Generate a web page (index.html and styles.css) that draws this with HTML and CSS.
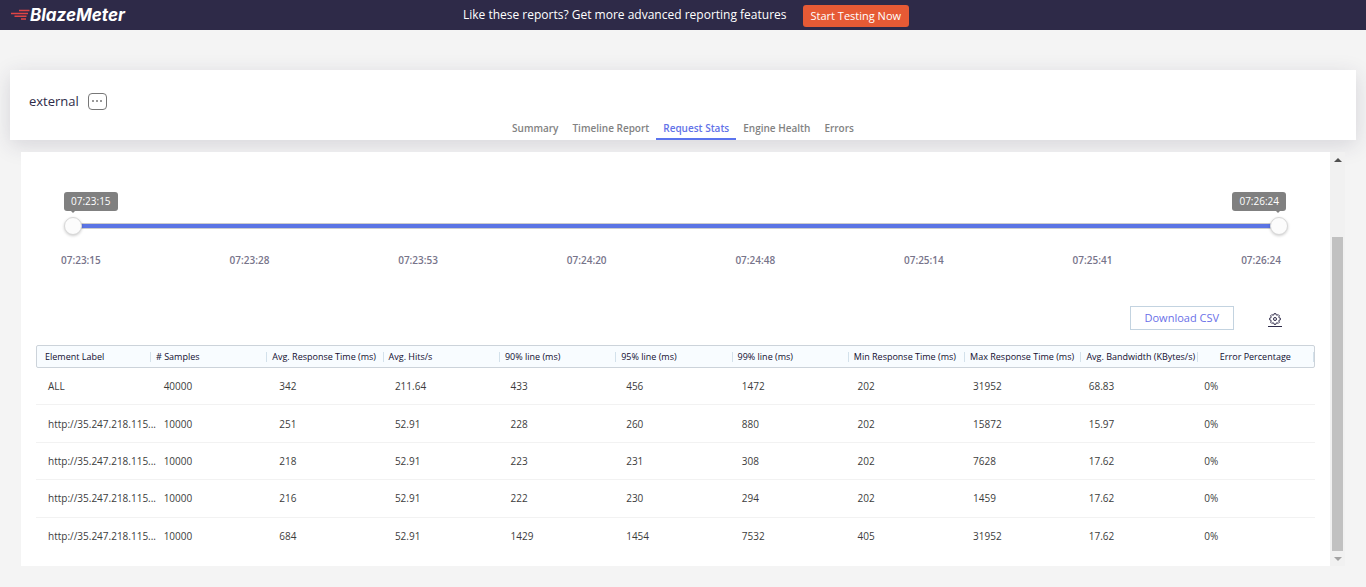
FILE: index.html
```
<!DOCTYPE html>
<html lang="en">
<head>
<meta charset="utf-8">
<meta name="viewport" content="width=device-width, initial-scale=1">
<title>BlazeMeter - Request Stats</title>
<link rel="stylesheet" href="styles.css">
</head>
<body>
<header class="topbar">
  <a class="logo" href="#">
    <svg class="logo-mark" viewBox="0 0 20 12" aria-hidden="true">
      <path d="M9 1.500H19.500M1 4.500H18M4.500 7.200H16.500M11 10H16" />
    </svg>
    <span>BlazeMeter</span>
  </a>
  <p class="promo">Like these reports? Get more advanced reporting features</p>
  <button class="cta" type="button">Start Testing Now</button>
</header>

<section class="report-head">
  <div class="report-title">
    <h1>external</h1>
    <button class="more" type="button" aria-label="More actions"><i></i><i></i><i></i></button>
  </div>
  <nav class="tabs">
    <a href="#">Summary</a>
    <a href="#">Timeline Report</a>
    <a class="active" href="#" aria-current="page">Request Stats</a>
    <a href="#">Engine Health</a>
    <a href="#">Errors</a>
  </nav>
</section>

<div class="viewport">
  <main class="panel">
    <div class="timeline">
      <div class="tips">
        <output class="tip tip-start" for="from">07:23:15</output>
        <output class="tip tip-end" for="to">07:26:24</output>
      </div>
      <div class="slider">
        <input id="from" type="range" min="0" max="189" value="0" aria-label="Start time">
        <input id="to" type="range" min="0" max="189" value="189" aria-label="End time">
      </div>
      <div class="scale">
        <span>07:23:15</span><span>07:23:28</span><span>07:23:53</span><span>07:24:20</span><span>07:24:48</span><span>07:25:14</span><span>07:25:41</span><span>07:26:24</span>
      </div>
    </div>

    <div class="actions">
      <button class="download" type="button">Download CSV</button>
      <button class="settings" type="button" aria-label="Table settings">
        <svg viewBox="0 0 12 12" aria-hidden="true">
          <path d="M4.900 1.800 5.200.6h1.600l.3 1.200 1 .4 1.100-.6 1.200 1.200-.6 1.100.4 1 1.200.3v1.600l-1.200.3-.4 1 .6 1.100-1.200 1.200-1.100-.6-1 .4-.3 1.200H5.200l-.3-1.200-1-.4-1.100.6-1.200-1.200.6-1.100-.4-1L.6 6.800V5.200l1.200-.3.4-1-.6-1.100 1.200-1.200 1.100.6z"/>
          <circle cx="6" cy="6" r="1.500"/>
        </svg>
      </button>
    </div>

    <table class="stats">
      <thead>
        <tr><th>Element Label</th><th># Samples</th><th>Avg. Response Time (ms)</th><th>Avg. Hits/s</th><th>90% line (ms)</th><th>95% line (ms)</th><th>99% line (ms)</th><th>Min Response Time (ms)</th><th>Max Response Time (ms)</th><th>Avg. Bandwidth (KBytes/s)</th><th>Error Percentage</th></tr>
      </thead>
      <tbody>
        <tr><td>ALL</td><td>40000</td><td>342</td><td>211.64</td><td>433</td><td>456</td><td>1472</td><td>202</td><td>31952</td><td>68.83</td><td>0%</td></tr>
        <tr><td>http://35.247.218.115...</td><td>10000</td><td>251</td><td>52.91</td><td>228</td><td>260</td><td>880</td><td>202</td><td>15872</td><td>15.97</td><td>0%</td></tr>
        <tr><td>http://35.247.218.115...</td><td>10000</td><td>218</td><td>52.91</td><td>223</td><td>231</td><td>308</td><td>202</td><td>7628</td><td>17.62</td><td>0%</td></tr>
        <tr><td>http://35.247.218.115...</td><td>10000</td><td>216</td><td>52.91</td><td>222</td><td>230</td><td>294</td><td>202</td><td>1459</td><td>17.62</td><td>0%</td></tr>
        <tr><td>http://35.247.218.115...</td><td>10000</td><td>684</td><td>52.91</td><td>1429</td><td>1454</td><td>7532</td><td>405</td><td>31952</td><td>17.62</td><td>0%</td></tr>
      </tbody>
    </table>
  </main>
  <div class="scrollbar" aria-hidden="true">
    <span class="arrow up"></span>
    <span class="thumb"></span>
    <span class="arrow down"></span>
  </div>
</div>
</body>
</html>
```
FILE: styles.css
```
* { box-sizing: border-box; }
body {
  margin: 0;
  background: #f4f4f4;
  color: #2e2a48;
  font-family: "Open Sans", sans-serif;
  font-size: 10px;
}
button { font-family: inherit; cursor: pointer; }
a { text-decoration: none; }

.topbar {
  display: grid;
  grid-template-columns: 1fr auto auto 1fr;
  align-items: center;
  height: 30px;
  padding: 0 4px 0 10px;
  background: #2e2a48;
  color: #fff;
}
.logo {
  display: flex;
  align-items: center;
  color: #fff;
  font: italic 700 17px/28px Inter, sans-serif;
}
.logo-mark {
  width: 20px;
  height: 12px;
  fill: none;
  stroke: #e04545;
  stroke-width: 1.4;
}
.promo { margin: 0; font-size: 12px; line-height: 28px; }
.cta {
  height: 22px;
  margin: 2px 0 0 16px;
  padding: 0 8px;
  border: 0;
  border-radius: 3px;
  background: #e65a35;
  color: #fff;
  font-size: 11px;
  line-height: 20px;
}

.report-head {
  display: flex;
  flex-direction: column;
  height: 70px;
  margin: 40px 10px 0;
  background: #fff;
  box-shadow: 0 5px 20px rgba(46, 42, 72, .15);
}
.report-title {
  display: flex;
  align-items: center;
  gap: 9px;
  padding: 22px 19px 0;
}
.report-title h1 { margin: 0; font-size: 13px; font-weight: 400; line-height: 18px; }
.more {
  display: flex;
  align-items: center;
  justify-content: center;
  gap: 2px;
  width: 19px;
  height: 17px;
  padding: 0;
  border: 1px solid #777;
  border-radius: 4px;
  background: #fff;
}
.more i { width: 2px; height: 2px; background: #999; }
.tabs { display: flex; justify-content: center; margin-top: auto; }
.tabs a {
  padding: 0 7px;
  border-bottom: 2px solid transparent;
  color: #828282;
  font-weight: 600;
  line-height: 20px;
}
.tabs .active { border-color: #5b74ee; color: #6272e8; }

.viewport { display: flex; margin: 12px 21px 0; position: relative; }
.panel { flex: 1; min-width: 0; padding: 40px 15px 11px; background: #fff; }

.timeline { padding: 0 27px 0 28px; }
.tips { display: flex; justify-content: space-between; padding-right: 2px; }
.tip {
  position: relative;
  padding: 0 7px;
  border-radius: 3px;
  background: #808080;
  color: #fff;
  line-height: 19px;
}
.tip::after {
  content: "";
  position: absolute;
  top: 19px;
  left: 7px;
  border: 2px solid transparent;
  border-top-color: #808080;
}
.tip-end::after { left: auto; right: 6px; }
.slider {
  position: relative;
  height: 18px;
  margin-top: 6px;
  background: linear-gradient(#ccc 0 1px, #5b74e4 1px 5px, #ccc 5px 6px) center / calc(100% - 18px) 6px no-repeat;
}
.slider input {
  position: absolute;
  inset: 0;
  width: 100%;
  height: 18px;
  margin: 0;
  appearance: none;
  background: transparent;
  pointer-events: none;
}
.slider input::-webkit-slider-thumb {
  appearance: none;
  width: 18px;
  height: 18px;
  border: 1px solid #d8d8d8;
  border-radius: 50%;
  background: #fcfcfc;
  box-shadow: 0 1px 3px rgba(0, 0, 0, .2);
  pointer-events: auto;
}
.scale {
  display: flex;
  justify-content: space-between;
  margin: 18px 7px 0 -3px;
  color: #77748a;
  font-weight: 600;
  line-height: 14px;
}

.actions {
  display: flex;
  align-items: center;
  justify-content: flex-end;
  gap: 34px;
  margin: 39px 33px 15px 0;
}
.download {
  height: 24px;
  padding: 0 14px;
  border: 1px solid #c3d3e0;
  background: #fff;
  color: #6a70e8;
  font-size: 11px;
  line-height: 20px;
}
.settings {
  display: flex;
  justify-content: center;
  width: 14px;
  padding: 3px 0 1px;
  border: 0;
  border-bottom: 1px solid #2e2a48;
  background: none;
}
.settings svg { width: 12px; height: 12px; fill: none; stroke: #2e2a48; stroke-width: 1; }

.stats, .stats thead { display: block; }
.stats tr { display: grid; }
.stats th, .stats td {
  padding: 0;
  white-space: nowrap;
  text-align: left;
}
.stats thead tr {
  grid-template-columns: 114px repeat(10, minmax(0, 1fr));
  align-items: center;
  height: 23px;
  border: 1px solid #ccd3da;
  border-radius: 2px;
  background: #f8fcff;
}
.stats th {
  padding-left: 5px;
  border-right: 1px solid #d3e1eb;
  color: #120e30;
  font-size: 9px;
  font-weight: 500;
  line-height: 10px;
}
.stats th:first-child { padding-left: 8px; }
.stats th:last-child { padding: 0; text-align: center; }
.stats tbody { display: grid; grid-auto-rows: 1fr; height: 187px; }
.stats tbody tr {
  grid-template-columns: repeat(11, minmax(0, 1fr));
  align-items: center;
  padding-right: 7px;
  border-bottom: 1px solid #f2f2f2;
}
.stats tbody tr:last-child { border-color: transparent; }
.stats td { padding-left: 12px; color: #3c3c3c; line-height: 14px; }

.scrollbar {
  display: flex;
  flex-direction: column;
  align-items: center;
  width: 15px;
  background: #f1f1f1;
}
.thumb { width: 11px; flex: 1; margin-top: 70px; background: #c1c1c1; }
.arrow { display: flex; align-items: center; justify-content: center; height: 15px; }
.arrow::before { content: ""; border: 4px solid transparent; }
.up::before { border-top: 0; border-bottom-color: #505050; }
.down::before { border-bottom: 0; border-top-color: #a3a3a3; }
```
